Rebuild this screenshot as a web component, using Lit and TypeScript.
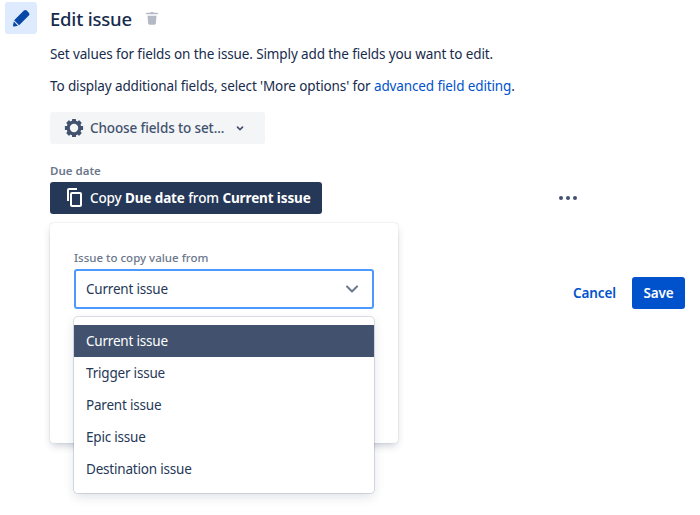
import { LitElement, html, svg, css } from "lit";
import { customElement } from "lit/decorators.js";

const options = ["Current issue", "Trigger issue", "Parent issue", "Epic issue", "Destination issue"];
const teeth = [0, 45, 90, 135, 180, 225, 270, 315];

@customElement("app-root")
export class AppRoot extends LitElement {
  static styles = css`
    :host {
      display: block;
      width: 700px;
      height: 515px;
      overflow: hidden;
      background: #fff;
      font-family: "Noto Sans", "Open Sans", sans-serif;
      font-size: 13.5px;
      letter-spacing: -0.12px;
      color: #172b4d;
    }
    .page { display: flex; gap: 13px; padding: 2px 15px 0 5px; }
    .badge {
      width: 32px; height: 32px; border-radius: 3px; background: #deebff;
      display: flex; align-items: center; justify-content: center; flex: none;
    }
    .badge svg { width: 24px; height: 24px; fill: #0747a6; }
    .content { flex: 1; min-width: 0; }
    .title-row { display: flex; align-items: center; height: 32px; gap: 11px; }
    h1 { margin: 0; font-size: 18.5px; letter-spacing: -0.2px; font-weight: 500; line-height: 34px; height: 32px; color: #172b4d; }
    .trash { width: 18px; height: 18px; fill: #b3bac5; }
    p { margin: 0; line-height: 20px; color: #172b4d; }
    .p1 { margin-top: 10px; }
    .p2 { margin-top: 12px; }
    a { color: #0052cc; text-decoration: none; }
    .choose {
      margin-top: 16px; display: inline-flex; align-items: center; height: 32px; width: 215px;
      box-sizing: border-box; padding-left: 12px; background: #f4f5f7; border-radius: 3px;
      color: #42526e; font-weight: 500;
    }
    .choose .gear { width: 24px; height: 24px; margin-right: 4px; }
    .choose .chev { width: 20px; height: 20px; fill: #42526e; margin-left: 6px; }
    .gear circle { fill: none; stroke: #42526e; stroke-width: 3.2; }
    .gear rect { fill: #42526e; }
    .field-label { margin-top: 19px; height: 16px; font-size: 11.5px; line-height: 16px; font-weight: 600; letter-spacing: 0; color: #6b778c; }
    .field { position: relative; margin-top: 3px; display: flex; align-items: center; height: 32px; }
    .copy {
      display: flex; align-items: center; height: 32px; width: 272px; box-sizing: border-box; padding-left: 15px;
      background: #253858; color: #fff; border-radius: 3px; font-weight: 500; white-space: nowrap;
    }
    .copy svg { width: 20px; height: 24px; margin-right: 5px; fill: none; stroke: #fff; stroke-width: 2; }
    .copy b { font-weight: 700; }
    .dots { margin-left: 237px; width: 20px; height: 4px; display: flex; gap: 3px; }
    .dots i { width: 4px; height: 4px; border-radius: 50%; background: #42526e; display: block; }
    .popover {
      position: absolute; left: 0; top: 41px; width: 348px; height: 220px; box-sizing: border-box;
      padding: 27px 24px 0; background: #fff; border-radius: 3px;
      box-shadow: 0 4px 8px -2px rgba(9,30,66,.25), 0 0 1px rgba(9,30,66,.31);
    }
    .pop-label { font-size: 11.5px; line-height: 16px; font-weight: 500; letter-spacing: 0; color: #6b778c; height: 16px; }
    .select-wrap { position: relative; margin-top: 3px; }
    .select {
      height: 40px; box-sizing: border-box; border: 2px solid #4c9aff; border-radius: 3px;
      display: flex; align-items: center; justify-content: space-between; padding: 0 8px 0 10px; color: #253858;
      letter-spacing: -0.2px;
    }
    .select svg { width: 24px; height: 24px; fill: #6b778c; }
    .menu {
      position: absolute; left: 0; right: 0; top: 48px; background: #fff; padding: 8px 0; border-radius: 4px;
      box-shadow: 0 0 0 1px rgba(9,30,66,.13), 0 4px 11px rgba(9,30,66,.13);
    }
    .item { height: 32px; line-height: 32px; padding: 0 12px; color: #253858; letter-spacing: -0.2px; }
    .item.on { background: #42526e; color: #fff; }
    .footer { margin-top: 63px; display: flex; justify-content: flex-end; align-items: center; gap: 4px; }
    .cancel, .save { height: 32px; line-height: 32px; font-weight: 600; padding: 0 12px; border-radius: 3px; }
    .cancel { color: #0052cc; }
    .save { background: #0052cc; color: #fff; width: 53px; box-sizing: border-box; text-align: center; padding: 0; }
  `;

  render() {
    return html`
      <div class="page">
        <div class="badge">
          <svg viewBox="0 0 24 24"><path d="M4.02 19.23a1 1 0 0 0 1.18 1.18l3.81-.78-4.21-4.21-.78 3.81zM19.84 6.71l-2.12-2.12A2 2 0 0 0 16.31 4c-.51 0-1.03.2-1.42.59l-9.75 9.75 4.95 4.95 9.75-9.75a2 2 0 0 0 0-2.83z"/></svg>
        </div>
        <div class="content">
          <div class="title-row">
            <h1>Edit issue</h1>
            <svg class="trash" viewBox="0 0 24 24"><path d="M5 5a1 1 0 0 0-1 1v1h16V6a1 1 0 0 0-1-1h-4.5l-1-1h-3l-1 1H5zm1 4 .8 10.1A2 2 0 0 0 8.8 21h6.4a2 2 0 0 0 2-1.9L18 9H6z"/></svg>
          </div>
          <p class="p1">Set values for fields on the issue. Simply add the fields you want to edit.</p>
          <p class="p2">To display additional fields, select 'More options' for <a>advanced field editing</a>.</p>
          <div class="choose">
            <svg class="gear" viewBox="0 0 24 24">
              <circle cx="12" cy="12" r="5.8"></circle>
              ${teeth.map((a) => svg`<rect x="10" y="2.9" width="4" height="4" rx=".6" transform="rotate(${a} 12 12)"></rect>`)}
            </svg>
            Choose fields to set...
            <svg class="chev" viewBox="0 0 24 24"><path d="M8.3 10.3a1 1 0 0 1 1.4 0l2.3 2.3 2.3-2.3a1 1 0 1 1 1.4 1.4l-3 3a1 1 0 0 1-1.4 0l-3-3a1 1 0 0 1 0-1.4z"/></svg>
          </div>
          <div class="field-label">Due date</div>
          <div class="field">
            <div class="copy">
              <svg viewBox="0 0 20 24">
                <rect x="6" y="7" width="10" height="13" rx="1"></rect>
                <path d="M3 15V4a1 1 0 0 1 1-1h8"></path>
              </svg>
              <span>Copy <b>Due date</b> from <b>Current issue</b></span>
            </div>
            <div class="dots"><i></i><i></i><i></i></div>
            <div class="popover">
              <div class="pop-label">Issue to copy value from</div>
              <div class="select-wrap">
                <div class="select">
                  <span>Current issue</span>
                  <svg viewBox="0 0 24 24"><path d="M6.3 8.8a1 1 0 0 1 1.4 0l4.3 4.3 4.3-4.3a1 1 0 1 1 1.4 1.4l-5 5a1 1 0 0 1-1.4 0l-5-5a1 1 0 0 1 0-1.4z"/></svg>
                </div>
                <div class="menu">
                  ${options.map((o, i) => html`<div class="item ${i === 0 ? "on" : ""}">${o}</div>`)}
                </div>
              </div>
            </div>
          </div>
          <div class="footer">
            <div class="cancel">Cancel</div>
            <div class="save">Save</div>
          </div>
        </div>
      </div>
    `;
  }
}
